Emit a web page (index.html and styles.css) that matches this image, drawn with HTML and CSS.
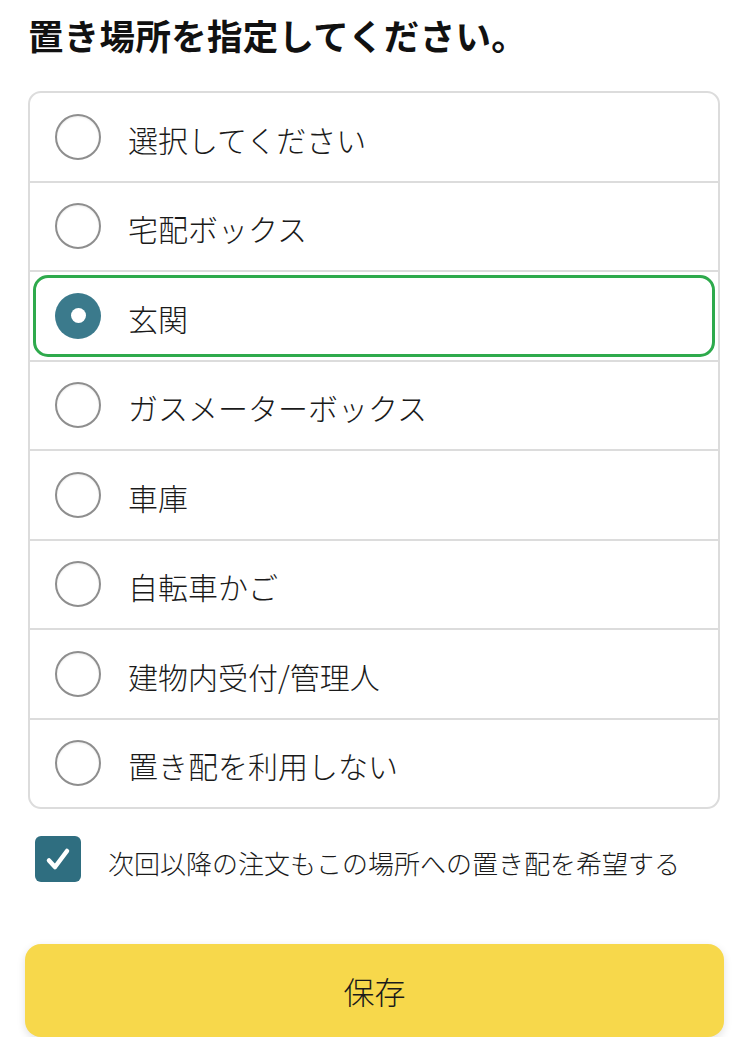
FILE: index.html
```html
<!DOCTYPE html>
<html lang="ja">
<head>
<meta charset="utf-8">
<title>置き場所</title>
<link rel="stylesheet" href="styles.css">
</head>
<body>
<div class="page">
  <h1 class="title">置き場所を指定してください。</h1>
  <div class="card">
    <div class="row"><div class="opt"><span class="radio"></span><span class="label">選択してください</span></div></div>
    <div class="row"><div class="opt"><span class="radio"></span><span class="label">宅配ボックス</span></div></div>
    <div class="row"><div class="opt selected"><span class="radio on"></span><span class="label">玄関</span></div></div>
    <div class="row"><div class="opt"><span class="radio"></span><span class="label">ガスメーターボックス</span></div></div>
    <div class="row"><div class="opt"><span class="radio"></span><span class="label">車庫</span></div></div>
    <div class="row"><div class="opt"><span class="radio"></span><span class="label">自転車かご</span></div></div>
    <div class="row"><div class="opt"><span class="radio"></span><span class="label">建物内受付/管理人</span></div></div>
    <div class="row"><div class="opt"><span class="radio"></span><span class="label">置き配を利用しない</span></div></div>
  </div>
  <div class="check-row">
    <span class="checkbox">
      <svg width="46" height="46" viewBox="0 0 46 46"><path d="M14 24.5 L20 31 L32 15" fill="none" stroke="#fff" stroke-width="4.5" stroke-linecap="round" stroke-linejoin="round"/></svg>
    </span>
    <span class="check-label">次回以降の注文もこの場所への置き配を希望する</span>
  </div>
  <button class="save">保存</button>
</div>
</body>
</html>
```
FILE: styles.css
```css
html, body {
  margin: 0;
  padding: 0;
  background: #fff;
}
body {
  font-family: "Noto Sans CJK JP", "Noto Sans", sans-serif;
  color: #222;
}
.page {
  padding: 14px 29px 0 28px;
  display: flex;
  flex-direction: column;
}
.title {
  margin: 0;
  font-size: 35.5px;
  line-height: 41px;
  font-weight: 700;
  color: #111;
  letter-spacing: 0.3px;
}
.card {
  margin-top: 36px;
  border: 2px solid #dcdcdc;
  border-radius: 13px;
  display: flex;
  flex-direction: column;
}
.row {
  height: 87.5px;
  box-sizing: border-box;
  padding: 3px 3px;
  display: flex;
}
.row + .row {
  border-top: 2px solid #dcdcdc;
  height: 89.5px;
}
.opt {
  flex: 1;
  display: flex;
  align-items: center;
  gap: 27px;
  padding-left: 19px;
  border: 3px solid transparent;
  border-radius: 15px;
}
.opt.selected {
  border-color: #2eaa4c;
}
.radio {
  width: 46px;
  height: 46px;
  box-sizing: border-box;
  border-radius: 50%;
  border: 2px solid #8e8e8e;
  box-shadow: inset 0 1px 2px rgba(0,0,0,0.08);
  flex: none;
  display: flex;
  align-items: center;
  justify-content: center;
}
.radio.on {
  border: none;
  background: #3b7a8c;
  box-shadow: none;
}
.radio.on::after {
  content: "";
  width: 15px;
  height: 15px;
  border-radius: 50%;
  background: #fff;
}
.label {
  font-size: 30px;
  line-height: 40px;
  font-weight: 300;
  color: #1a1a1a;
  padding-top: 4px;
}
.check-row {
  margin-top: 27px;
  margin-left: 7px;
  display: flex;
  align-items: center;
  gap: 27px;
}
.checkbox {
  width: 46px;
  height: 46px;
  border-radius: 6px;
  background: #2f6e80;
  flex: none;
  display: flex;
}
.check-label {
  font-size: 26px;
  line-height: 34px;
  font-weight: 300;
  color: #1a1a1a;
  padding-top: 8px;
}
.save {
  margin: 62px -4px 0 -3px;
  height: 93px;
  border: none;
  border-radius: 16px;
  background: #f7d84b;
  box-shadow: 0 3px 8px rgba(0,0,0,0.12);
  font-family: "Noto Sans CJK JP", "Noto Sans", sans-serif;
  font-size: 31px;
  font-weight: 300;
  color: #1a1a1a;
  padding: 0;
}
```
